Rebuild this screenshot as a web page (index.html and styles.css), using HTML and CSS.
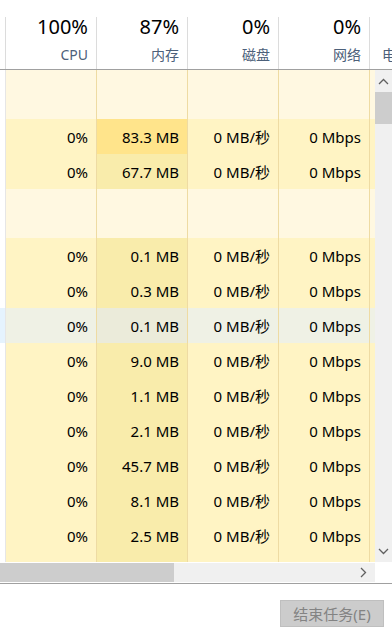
FILE: index.html
```html
<!DOCTYPE html>
<html lang="zh-CN">
<head>
    <meta charset="UTF-8">
    <meta name="viewport" content="width=device-width, initial-scale=1.0">
    <title>任务管理器</title>
    <link rel="stylesheet" href="styles.css">
</head>
<body>
<div class="window">
    <div class="header">
        <div class="hcell name"></div>
        <div class="hcell"><span class="pct">100%</span><span class="label">CPU</span></div>
        <div class="hcell"><span class="pct">87%</span><span class="label">内存</span></div>
        <div class="hcell"><span class="pct">0%</span><span class="label">磁盘</span></div>
        <div class="hcell"><span class="pct">0%</span><span class="label">网络</span></div>
        <div class="hcell tail"><span class="pct">&nbsp;</span><span class="label">电源使用情况</span></div>
    </div>

    <div class="body">
        <div class="rows">
            <div class="row group">
                <div class="c name"></div><div class="c"></div><div class="c mem"></div><div class="c"></div><div class="c"></div><div class="c tail"></div>
            </div>
            <div class="row">
                <div class="c name"></div><div class="c">0%</div><div class="c mem high">83.3 MB</div><div class="c">0 MB/秒</div><div class="c">0 Mbps</div><div class="c tail"></div>
            </div>
            <div class="row">
                <div class="c name"></div><div class="c">0%</div><div class="c mem">67.7 MB</div><div class="c">0 MB/秒</div><div class="c">0 Mbps</div><div class="c tail"></div>
            </div>
            <div class="row group">
                <div class="c name"></div><div class="c"></div><div class="c mem"></div><div class="c"></div><div class="c"></div><div class="c tail"></div>
            </div>
            <div class="row">
                <div class="c name"></div><div class="c">0%</div><div class="c mem">0.1 MB</div><div class="c">0 MB/秒</div><div class="c">0 Mbps</div><div class="c tail"></div>
            </div>
            <div class="row">
                <div class="c name"></div><div class="c">0%</div><div class="c mem">0.3 MB</div><div class="c">0 MB/秒</div><div class="c">0 Mbps</div><div class="c tail"></div>
            </div>
            <div class="row selected">
                <div class="c name"></div><div class="c">0%</div><div class="c mem">0.1 MB</div><div class="c">0 MB/秒</div><div class="c">0 Mbps</div><div class="c tail"></div>
            </div>
            <div class="row">
                <div class="c name"></div><div class="c">0%</div><div class="c mem">9.0 MB</div><div class="c">0 MB/秒</div><div class="c">0 Mbps</div><div class="c tail"></div>
            </div>
            <div class="row">
                <div class="c name"></div><div class="c">0%</div><div class="c mem">1.1 MB</div><div class="c">0 MB/秒</div><div class="c">0 Mbps</div><div class="c tail"></div>
            </div>
            <div class="row">
                <div class="c name"></div><div class="c">0%</div><div class="c mem">2.1 MB</div><div class="c">0 MB/秒</div><div class="c">0 Mbps</div><div class="c tail"></div>
            </div>
            <div class="row">
                <div class="c name"></div><div class="c">0%</div><div class="c mem">45.7 MB</div><div class="c">0 MB/秒</div><div class="c">0 Mbps</div><div class="c tail"></div>
            </div>
            <div class="row">
                <div class="c name"></div><div class="c">0%</div><div class="c mem">8.1 MB</div><div class="c">0 MB/秒</div><div class="c">0 Mbps</div><div class="c tail"></div>
            </div>
            <div class="row">
                <div class="c name"></div><div class="c">0%</div><div class="c mem">2.5 MB</div><div class="c">0 MB/秒</div><div class="c">0 Mbps</div><div class="c tail"></div>
            </div>
            <div class="row">
                <div class="c name"></div><div class="c"></div><div class="c mem"></div><div class="c"></div><div class="c"></div><div class="c tail"></div>
            </div>
        </div>

        <div class="vscroll">
            <div class="vbtn">
                <svg width="11" height="7" viewBox="0 0 11 7"><polyline points="1,6 5.5,1.5 10,6" fill="none" stroke="#606060" stroke-width="1.3"/></svg>
            </div>
            <div class="vthumb"></div>
            <div class="vspace"></div>
            <div class="vbtn">
                <svg width="11" height="7" viewBox="0 0 11 7"><polyline points="1,1 5.5,5.5 10,1" fill="none" stroke="#606060" stroke-width="1.3"/></svg>
            </div>
        </div>
    </div>

    <div class="hbar">
        <div class="htrack">
            <div class="hthumb"></div>
            <div class="hbtn">
                <svg width="7" height="11" viewBox="0 0 7 11"><polyline points="1,1 5.5,5.5 1,10" fill="none" stroke="#606060" stroke-width="1.3"/></svg>
            </div>
        </div>
        <div class="corner"></div>
    </div>

    <div class="footer">
        <button class="end-task" disabled>结束任务(E)</button>
    </div>
</div>
</body>
</html>
```

FILE: styles.css
```css
body {
    margin: 0;
    padding: 0;
    background-color: white;
    font-family: "Noto Sans", "Noto Sans CJK SC", sans-serif;
    color: #000;
}

.window {
    width: 392px;
    height: 635px;
    overflow: hidden;
    display: flex;
    flex-direction: column;
}

/* header */
.header {
    height: 70px;
    box-sizing: border-box;
    border-bottom: 1px solid #a0a0a0;
    display: flex;
    overflow: hidden;
    flex-shrink: 0;
}

.hcell {
    margin-top: 17px;
    width: 91px;
    flex-shrink: 0;
    box-sizing: border-box;
    border-right: 1px solid #dcdcdc;
    padding-right: 8px;
    display: flex;
    flex-direction: column;
    align-items: flex-end;
}

.hcell.name {
    width: 6px;
    padding: 0;
}

.hcell.tail {
    width: 120px;
    border-right: none;
    align-items: flex-start;
    padding-left: 12px;
}

.pct {
    font-size: 20px;
    line-height: 20px;
    white-space: nowrap;
}

.label {
    margin-top: 8px;
    font-size: 14px;
    line-height: 20px;
    color: #4c607a;
    white-space: nowrap;
}

/* rows */
.body {
    height: 492px;
    display: flex;
    flex-shrink: 0;
}

.rows {
    width: 375px;
    overflow: hidden;
}

.row {
    height: 35px;
    display: flex;
}

.row.group {
    height: 49px;
}

.c {
    width: 91px;
    flex-shrink: 0;
    box-sizing: border-box;
    border-right: 1px solid #eedba3;
    background-color: #fff4c4;
    padding-right: 8px;
    display: flex;
    align-items: center;
    justify-content: flex-end;
    font-size: 15px;
    line-height: 20px;
    white-space: nowrap;
}

.c.name {
    width: 6px;
    padding: 0;
    background-color: white;
    border-right: 1px solid #e6e6e6;
}

.c.tail {
    width: 40px;
    border-right: none;
}

.c.mem {
    background-color: #f9ecab;
}

.c.mem.high {
    background-color: #ffe48b;
}

.row.group .c,
.row.group .c.mem {
    background-color: #fff8e1;
}

.row.group .c.name {
    background-color: white;
}

.row.selected .c {
    background-color: #eff1e5;
}

.row.selected .c.mem {
    background-color: #ebebda;
}

.row.selected .c.name {
    background-color: #e5f3fe;
}

/* scrollbars */
.vscroll {
    width: 17px;
    background-color: #f0f0f0;
    display: flex;
    flex-direction: column;
}

.vbtn {
    height: 22px;
    display: flex;
    align-items: center;
    justify-content: center;
}

.vthumb {
    height: 32px;
    background-color: #cdcdcd;
}

.vspace {
    flex: 1;
}

.hbar {
    height: 21px;
    box-sizing: border-box;
    padding: 1px 0;
    display: flex;
    flex-shrink: 0;
}

.htrack {
    width: 375px;
    background-color: #f0f0f0;
    display: flex;
    align-items: center;
}

.hthumb {
    width: 174px;
    height: 100%;
    background-color: #cdcdcd;
}

.hbtn {
    margin-left: auto;
    width: 24px;
    display: flex;
    justify-content: center;
    padding-right: 0;
}

.corner {
    flex: 1;
    background-color: white;
}

/* footer */
.footer {
    flex: 1;
    border-top: 1px solid #a0a0a0;
    display: flex;
    justify-content: flex-end;
    align-items: flex-start;
    padding: 16px 8px 0 0;
}

.end-task {
    width: 104px;
    height: 27px;
    background-color: #cccccc;
    border: 1px solid #bfbfbf;
    color: #838383;
    font-family: "Noto Sans", "Noto Sans CJK SC", sans-serif;
    font-size: 15px;
    padding: 0;
}
```
